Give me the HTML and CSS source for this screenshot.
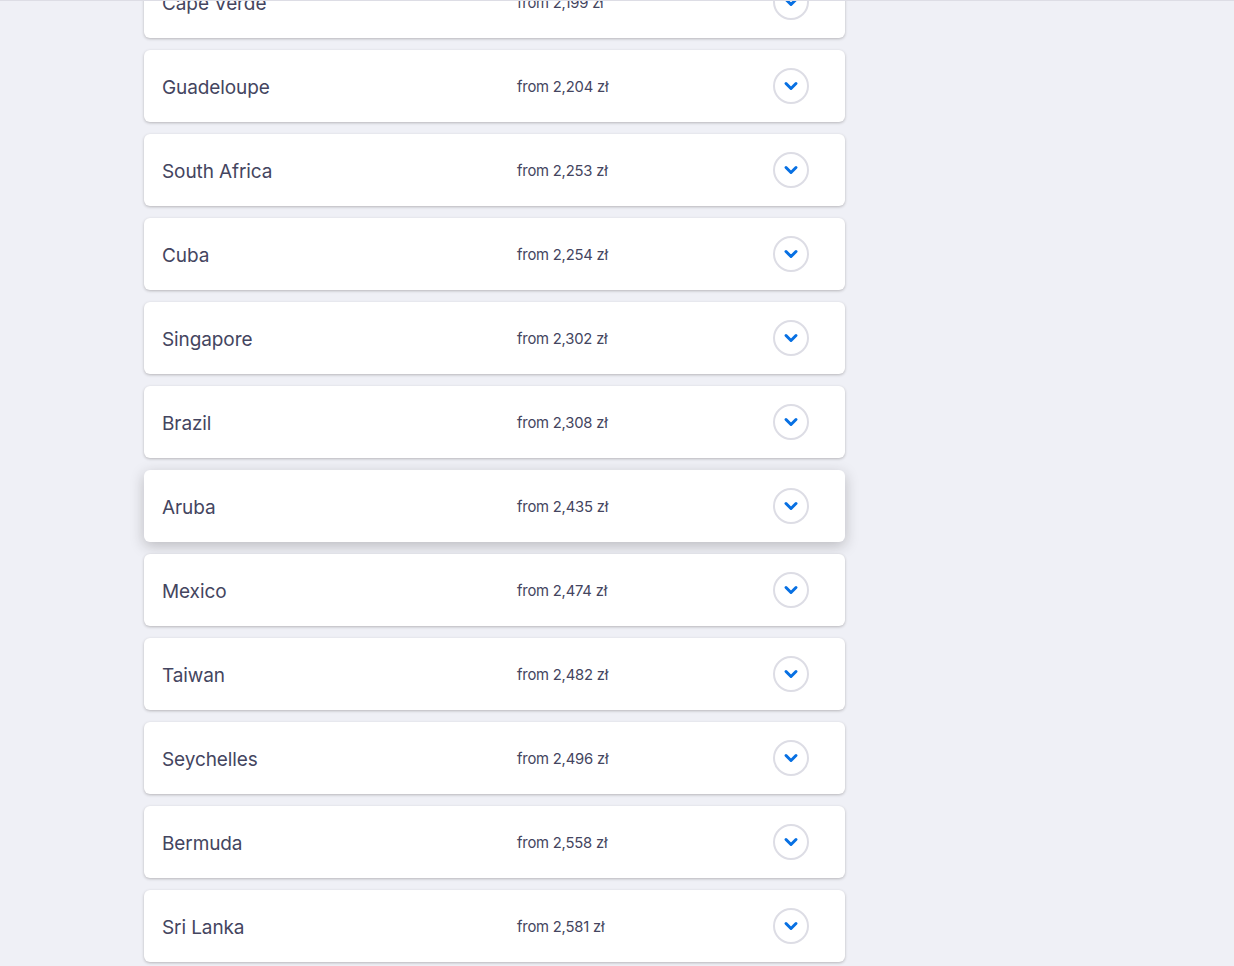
FILE: index.html
```html
<!DOCTYPE html>
<html lang="en">

<head>
    <meta charset="UTF-8">
    <meta name="viewport" content="width=device-width, initial-scale=1.0">
    <title>Cheapest destinations</title>
    <link rel="stylesheet" href="styles.css">
</head>

<body>
    <div class="page">
        <ul class="destination-list">
            <li class="destination-card">
                <span class="country">Cape Verde</span>
                <span class="price">from 2,199 zł</span>
                <button class="expand-button"><svg viewBox="0 0 16 16"><path d="M3 5.5l5 5 5-5"/></svg></button>
            </li>
            <li class="destination-card">
                <span class="country">Guadeloupe</span>
                <span class="price">from 2,204 zł</span>
                <button class="expand-button"><svg viewBox="0 0 16 16"><path d="M3 5.5l5 5 5-5"/></svg></button>
            </li>
            <li class="destination-card">
                <span class="country">South Africa</span>
                <span class="price">from 2,253 zł</span>
                <button class="expand-button"><svg viewBox="0 0 16 16"><path d="M3 5.5l5 5 5-5"/></svg></button>
            </li>
            <li class="destination-card">
                <span class="country">Cuba</span>
                <span class="price">from 2,254 zł</span>
                <button class="expand-button"><svg viewBox="0 0 16 16"><path d="M3 5.5l5 5 5-5"/></svg></button>
            </li>
            <li class="destination-card">
                <span class="country">Singapore</span>
                <span class="price">from 2,302 zł</span>
                <button class="expand-button"><svg viewBox="0 0 16 16"><path d="M3 5.5l5 5 5-5"/></svg></button>
            </li>
            <li class="destination-card">
                <span class="country">Brazil</span>
                <span class="price">from 2,308 zł</span>
                <button class="expand-button"><svg viewBox="0 0 16 16"><path d="M3 5.5l5 5 5-5"/></svg></button>
            </li>
            <li class="destination-card hovered">
                <span class="country">Aruba</span>
                <span class="price">from 2,435 zł</span>
                <button class="expand-button"><svg viewBox="0 0 16 16"><path d="M3 5.5l5 5 5-5"/></svg></button>
            </li>
            <li class="destination-card">
                <span class="country">Mexico</span>
                <span class="price">from 2,474 zł</span>
                <button class="expand-button"><svg viewBox="0 0 16 16"><path d="M3 5.5l5 5 5-5"/></svg></button>
            </li>
            <li class="destination-card">
                <span class="country">Taiwan</span>
                <span class="price">from 2,482 zł</span>
                <button class="expand-button"><svg viewBox="0 0 16 16"><path d="M3 5.5l5 5 5-5"/></svg></button>
            </li>
            <li class="destination-card">
                <span class="country">Seychelles</span>
                <span class="price">from 2,496 zł</span>
                <button class="expand-button"><svg viewBox="0 0 16 16"><path d="M3 5.5l5 5 5-5"/></svg></button>
            </li>
            <li class="destination-card">
                <span class="country">Bermuda</span>
                <span class="price">from 2,558 zł</span>
                <button class="expand-button"><svg viewBox="0 0 16 16"><path d="M3 5.5l5 5 5-5"/></svg></button>
            </li>
            <li class="destination-card">
                <span class="country">Sri Lanka</span>
                <span class="price">from 2,581 zł</span>
                <button class="expand-button"><svg viewBox="0 0 16 16"><path d="M3 5.5l5 5 5-5"/></svg></button>
            </li>
        </ul>
    </div>
</body>

</html>
```

FILE: styles.css
```css
* {
    margin: 0;
    padding: 0;
    box-sizing: border-box;
}

body {
    font-family: 'Inter', 'Noto Sans', sans-serif;
    background: #eff0f6;
    color: #444560;
    height: 966px;
    overflow: hidden;
    border-top: 1px solid #dddde5;
}

.page {
    padding-left: 144px;
}

.destination-list {
    list-style: none;
    width: 701px;
    margin-top: -35px;
    display: flex;
    flex-direction: column;
    gap: 12px;
}

.destination-card {
    display: grid;
    grid-template-columns: 355px 1fr 36px;
    align-items: center;
    height: 72px;
    padding: 0 36px 0 18px;
    background: white;
    border-radius: 6px;
    box-shadow: 0 1px 3px rgba(37, 32, 31, 0.28);
}

.destination-card.hovered {
    box-shadow: 0 4px 14px rgba(37, 32, 31, 0.25);
}

.country {
    font-size: 19px;
    letter-spacing: -0.1px;
    padding-top: 2px;
}

.price {
    font-size: 14.8px;
    letter-spacing: -0.2px;
    padding-top: 2px;
}

.expand-button {
    width: 36px;
    height: 36px;
    border: 2px solid #dddde5;
    border-radius: 50%;
    background: white;
    display: flex;
    align-items: center;
    justify-content: center;
    cursor: pointer;
}

.expand-button svg {
    width: 16px;
    height: 16px;
    fill: none;
    stroke: #0770e3;
    stroke-width: 3;
    stroke-linecap: round;
    stroke-linejoin: round;
}
```
